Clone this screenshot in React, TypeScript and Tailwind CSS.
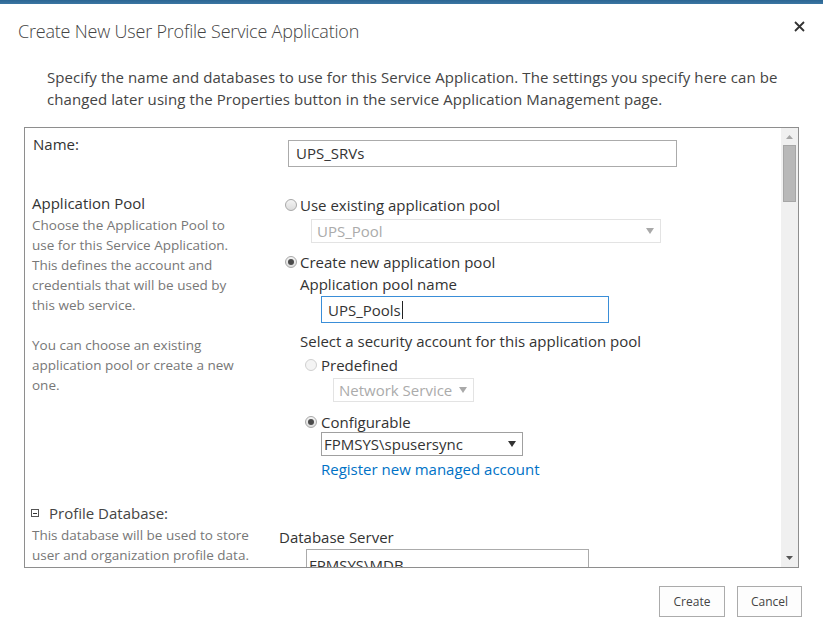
import React from "react";

const Radio: React.FC<{ checked?: boolean; disabled?: boolean }> = ({
  checked,
  disabled,
}) => (
  <span
    className={`flex h-[12px] w-[12px] shrink-0 items-center justify-center rounded-full border ${
      disabled
        ? "border-[#d0d0d0] bg-[#f4f4f4]"
        : "border-[#a8a8a8] bg-gradient-to-b from-[#f4f4f4] to-[#dcdcdc]"
    }`}
  >
    {checked && <span className="h-[6px] w-[6px] rounded-full bg-[#4a4a4a]" />}
  </span>
);

const Caret: React.FC<{ light?: boolean }> = ({ light }) => (
  <svg width="8" height="6" viewBox="0 0 8 6">
    <path d="M0 0h8L4 6z" fill={light ? "#a9a9a9" : "#333"} />
  </svg>
);

export default function App() {
  return (
    <div className="relative h-[635px] w-[823px] overflow-hidden bg-white font-['Open_Sans',sans-serif] text-[#444]">
      <div className="h-[4px] bg-gradient-to-b from-[#2b6592] to-[#3b76a3]" />

      <div className="flex items-start justify-between pl-[18px] pr-[16px] pt-[13px]">
        <h1 className="text-[18px] font-light leading-[28px] tracking-[-0.2px] text-[#444]">
          Create New User Profile Service Application
        </h1>
        <button className="mt-[2px] p-[2px]">
          <svg width="11" height="11" viewBox="0 0 11 11">
            <path d="M1 1l9 9M10 1l-9 9" stroke="#333" strokeWidth="1.8" />
          </svg>
        </button>
      </div>

      <p className="mt-[21px] pl-[47px] text-[15px] leading-[22px] tracking-[0.08px] text-[#444]">
        <span className="block whitespace-nowrap">
          Specify the name and databases to use for this Service Application. The settings you specify here can be
        </span>
        <span className="block whitespace-nowrap">
          changed later using the Properties button in the service Application Management page.
        </span>
      </p>

      <div className="mx-[24px] mt-[17px] flex h-[441px] border border-[#8e8e8e]">
        <div className="flex-1 overflow-hidden pl-[7px] pt-[6px]">
          {/* Name */}
          <div className="flex">
            <div className="w-[247px] pl-[1px] text-[15px] leading-[20px] text-[#333]">Name:</div>
            <div className="ml-[9px] mt-[6px] flex h-[27px] w-[389px] items-center border border-[#ababab] px-[7px] text-[15px] text-[#333]">
              UPS_SRVs
            </div>
          </div>

          {/* Application Pool */}
          <div className="mt-[26px] flex">
            <div className="w-[247px]">
              <div className="text-[15px] leading-[20px] text-[#333]">Application Pool</div>
              <div className="mt-[2px] w-[205px] text-[13.5px] leading-[20px] text-[#777]">
                <p>Choose the Application Pool to use for this Service Application. This defines the account and credentials that will be used by this web service.</p>
                <p className="mt-[20px]">You can choose an existing application pool or create a new one.</p>
              </div>
            </div>
            <div className="text-[15px] leading-[20px] text-[#333]">
              <div className="ml-[6px] mt-[2px] flex items-center gap-[3px]">
                <Radio />
                <span>Use existing application pool</span>
              </div>
              <div className="ml-[32px] mt-[4px] flex h-[24px] w-[350px] items-center justify-between border border-[#e3e3e3] pl-[5px] pr-[6px] text-[#ababab]">
                <span>UPS_Pool</span>
                <Caret light />
              </div>
              <div className="ml-[6px] mt-[9px] flex items-center gap-[3px]">
                <Radio checked />
                <span>Create new application pool</span>
              </div>
              <div className="ml-[21px] mt-[2px]">Application pool name</div>
              <div className="ml-[42px] mt-[2px] flex h-[27px] w-[288px] items-center border border-[#3a8ed8] px-[6px]">
                <span>UPS_Pools</span>
                <span className="ml-[1px] h-[18px] w-[1px] bg-[#222]" />
              </div>
              <div className="ml-[21px] mt-[8px]">Select a security account for this application pool</div>
              <div className="ml-[26px] mt-[4px] flex items-center gap-[4px]">
                <Radio disabled />
                <span>Predefined</span>
              </div>
              <div className="ml-[54px] mt-[3px] flex h-[24px] w-[141px] items-center justify-between border border-[#e3e3e3] pl-[5px] pr-[6px] text-[#ababab]">
                <span>Network Service</span>
                <Caret light />
              </div>
              <div className="ml-[26px] mt-[10px] flex items-center gap-[4px]">
                <Radio checked />
                <span>Configurable</span>
              </div>
              <div className="ml-[42px] flex h-[24px] w-[202px] items-center justify-between border border-[#a0a0a0] pl-[2px] pr-[6px]">
                <span>FPMSYS\spusersync</span>
                <Caret />
              </div>
              <div className="ml-[42px] mt-[3px] text-[#0072c6]">Register new managed account</div>
            </div>
          </div>

          {/* Profile Database */}
          <div className="mt-[24px] flex">
            <div className="w-[247px]">
              <div className="flex items-center text-[15px] leading-[20px] text-[#444]">
                <span className="ml-[-1px] flex h-[8px] w-[8px] items-center justify-center border border-[#555]">
                  <span className="h-[1px] w-[4px] bg-[#333]" />
                </span>
                <span className="ml-[10px]">Profile Database:</span>
              </div>
              <div className="mt-[2px] text-[13.5px] leading-[20px] text-[#777]">
                <p>This database will be used to store user and organization profile data.</p>
              </div>
            </div>
            <div className="text-[15px] leading-[20px] text-[#333]">
              <div className="mt-[24px]">Database Server</div>
              <div className="ml-[27px] mt-[2px] flex h-[27px] w-[283px] items-end border border-[#ababab] px-[2px]">
                <span>FPMSYS\MDB</span>
              </div>
            </div>
          </div>
        </div>

        {/* scrollbar */}
        <div className="flex w-[17px] flex-col items-center bg-[#f0f0f0]">
          <svg className="mt-[7px]" width="7" height="4" viewBox="0 0 7 4">
            <path d="M0 4h7L3.5 0z" fill="#a6a6a6" />
          </svg>
          <div className="mt-[6px] h-[57px] w-[13px] border border-[#a6a6a6] bg-[#b8b8b8]" />
          <div className="flex-1" />
          <svg className="mb-[7px]" width="7" height="4" viewBox="0 0 7 4">
            <path d="M0 0h7L3.5 4z" fill="#555" />
          </svg>
        </div>
      </div>

      <div className="mt-[18px] flex justify-end gap-[12px] pr-[21px]">
        <button className="h-[31px] w-[66px] border border-[#ababab] bg-[#fdfdfd] text-[12px] text-[#444]">Create</button>
        <button className="h-[31px] w-[65px] border border-[#ababab] bg-[#fdfdfd] text-[12px] text-[#444]">Cancel</button>
      </div>
    </div>
  );
}
